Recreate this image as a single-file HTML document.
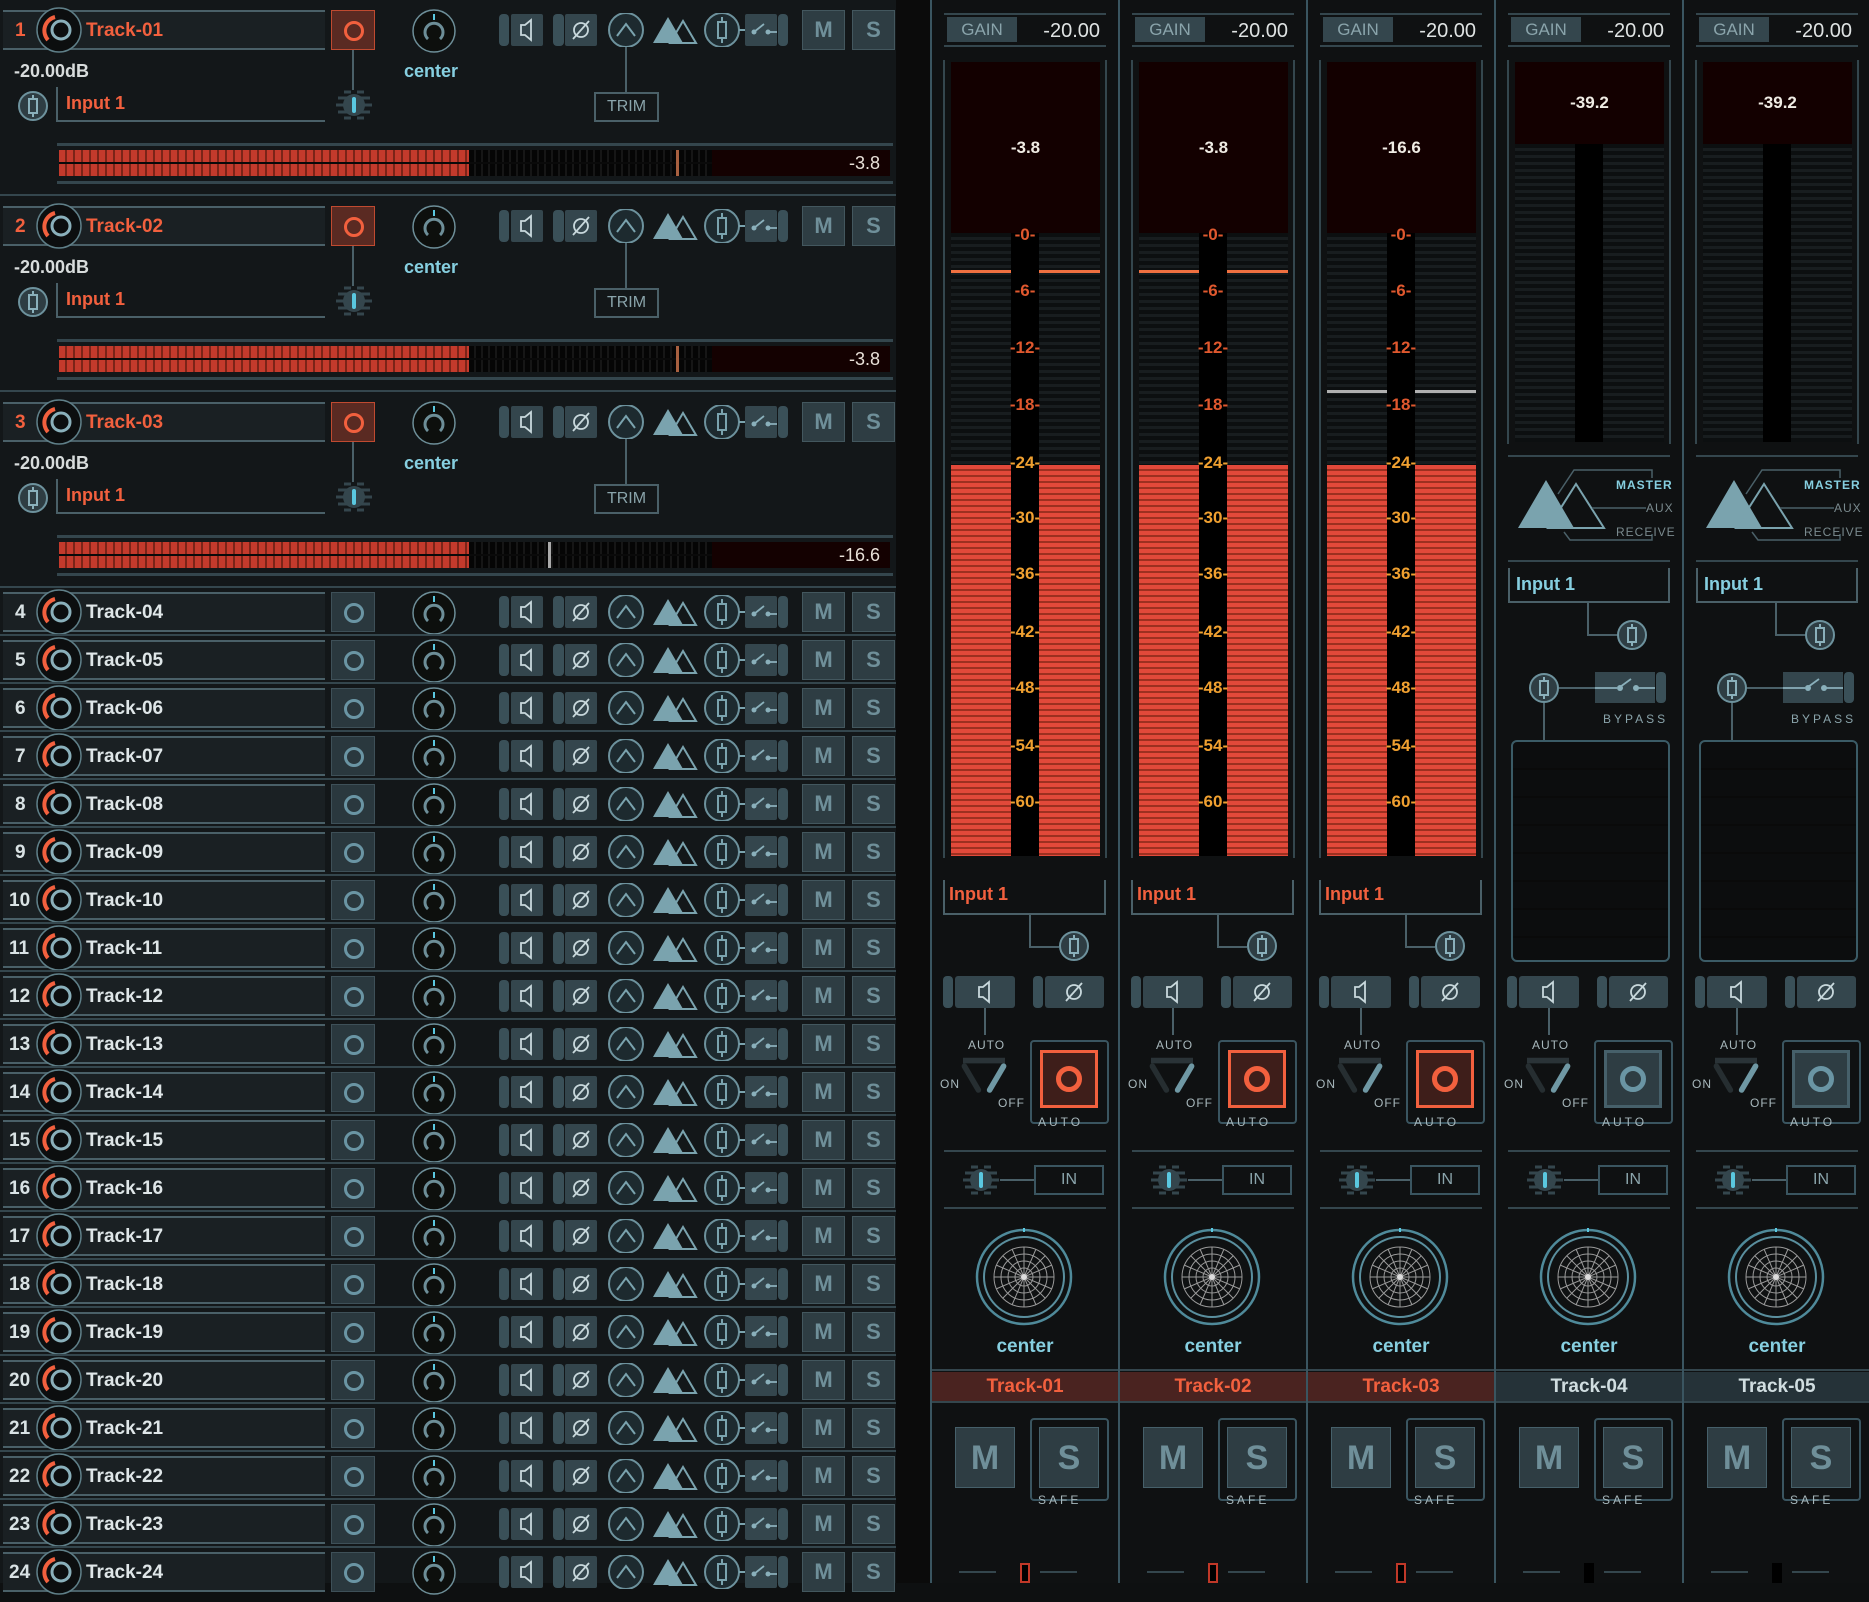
<!DOCTYPE html>
<html><head><meta charset="utf-8">
<style>
*{margin:0;padding:0;box-sizing:border-box}
body{width:1869px;height:1583px;background:#0e1011;position:relative;overflow:hidden;font-family:"Liberation Sans",sans-serif}
.a{position:absolute}
#left{position:absolute;left:0;top:0;width:896px;height:1583px;background:#131719}
.r{position:absolute;left:0;width:896px;height:60px}
.sep{position:absolute;left:0;top:4px;width:896px;height:2px;background:#34464d}
.nf{position:absolute;left:3px;top:10px;width:322px;height:40px;background:#1a2023;border-top:2px solid #4a6068;border-bottom:2px solid #4a6068}
.nf b{position:absolute;left:12px;top:8px;font-size:19px;color:#d9e2e4;font-weight:bold}
.nf span{position:absolute;left:83px;top:8px;font-size:19px;color:#dfe6e8;font-weight:bold}
.ex .nf b,.ex .nf span{color:#f2603e}
.nf svg{position:absolute;left:32px;top:-6px}
.rec{position:absolute;left:331px;top:10px;width:44px;height:40px;background:#2a383e;border:1px solid #3e5058}
.rec:after{content:"";position:absolute;left:12px;top:10px;width:14px;height:14px;border:3px solid #6a95a4;border-radius:50%}
.ex .rec{background:#5a2a22;border-color:#c04a30}
.ex .rec:after{border-color:#f2603e}
.pk{position:absolute;left:411px;top:8px}
.ic{position:absolute;left:499px;top:13px}
.m,.s{position:absolute;top:10px;width:43px;height:40px;background:#2e3d43;border:1px solid #43575e;color:#6f8f99;font-size:22px;font-weight:bold;text-align:center;line-height:38px}
.m{left:802px}.s{left:852px}
.db{position:absolute;left:14px;top:61px;color:#d8dcdc;font-size:18px;font-weight:bold}
.mic{position:absolute;left:17px;top:90px}
.inp{position:absolute;left:56px;top:87px;width:269px;height:35px;border-left:2px solid #4a6068;border-bottom:2px solid #4a6068}
.inp span{position:absolute;left:8px;top:6px;color:#f2603e;font-size:18px;font-weight:bold}
.fd{position:absolute;left:334px;top:88px}
.cen{position:absolute;left:404px;top:61px;color:#86cfe0;font-size:18px;font-weight:bold}
.vl{position:absolute;left:625px;top:47px;width:2px;height:46px;background:#4a6068}
.trim{position:absolute;left:594px;top:92px;width:65px;height:30px;border:2px solid #4a6068;color:#8aa4ab;font-size:16px;text-align:center;line-height:26px}
.ml{position:absolute;left:57px;width:836px;height:3px;background:#34464d}
.mtr{position:absolute;left:59px;top:150px;width:831px;height:26px;background:#0a0a0a}
.ln{position:absolute;left:0;height:12px;background:repeating-linear-gradient(90deg,#c33a2c 0 6px,#7a2418 6px 8px)}
.dk{position:absolute;height:12px;background:repeating-linear-gradient(90deg,#050505 0 5px,#161616 5px 7px)}
.pv{position:absolute;left:653px;top:0;width:178px;height:26px;background:#140101;color:#e8e0d8;font-size:18px;text-align:right;padding-right:10px;line-height:26px}
.pm{position:absolute;top:0;width:3px;height:26px;background:#a86040}
.pm.g{background:#aaa}
#gap{position:absolute;left:896px;top:0;width:34px;height:1583px;background:#0b0b0b}
.st{position:absolute;top:0;width:188px;height:1583px;background:#0f1112;border-left:2px solid #3a5560}
.hl{position:absolute;left:12px;width:162px;height:2px;background:#34464d}
.gain{position:absolute;left:15px;top:17px;width:70px;height:25px;background:#34464d;color:#8aa4ab;font-size:17px;text-align:center;line-height:25px}
.gv{position:absolute;left:90px;top:19px;width:78px;height:25px;color:#dfe3e3;font-size:20px;text-align:right;line-height:25px}
.vf{position:absolute;top:60px;width:2px;background:#34464d}
.mb{position:absolute;left:19px;top:62px;width:149px;background:#130000;color:#f0ece4;font-size:17px;font-weight:bold;text-align:center}
.sc{position:absolute;left:19px;width:149px;background:repeating-linear-gradient(180deg,#0c0f10 0 4px,#181d1f 4px 7px)}
.rf{position:absolute;left:19px;width:149px;top:465px;height:391px;background:repeating-linear-gradient(180deg,#e2493a 0 4px,#9c3020 4px 6px)}
.cc{position:absolute;left:79px;width:28px;background:#000}
.lb{position:absolute;left:56px;width:74px;text-align:center;color:#e0582e;font-size:17px;font-weight:bold}
.fl{position:absolute;height:3px;background:#f07040}
.si{position:absolute;left:11px;top:880px;width:163px;height:35px;border-left:2px solid #4a6068;border-right:2px solid #4a6068;border-bottom:2px solid #4a6068}
.si span{position:absolute;left:4px;top:4px;color:#f2603e;font-size:18px;font-weight:bold}
.btn{position:absolute;top:976px;height:32px;background:#34464d;border-radius:3px}
.tab{position:absolute;top:976px;width:10px;height:32px;background:#3a5058;border-radius:4px}
.t{position:absolute;color:#a8b8bc;font-size:12px;letter-spacing:1px}
.ab{position:absolute;left:98px;top:1040px;width:79px;height:84px;border:2px solid #3a5560;border-radius:4px}
.ai{position:absolute;left:108px;top:1050px;width:58px;height:58px;background:#3e1e1a;border:3px solid #f2603e}
.ai:after{content:"";position:absolute;left:13px;top:13px;width:26px;height:26px;border:5px solid #f2603e;border-radius:50%;box-sizing:border-box}
.ai.g{background:#2e3d43;border-color:#46606a}
.ai.g:after{border-color:#6a95a4}
.inb{position:absolute;left:102px;top:1165px;width:70px;height:30px;border:2px solid #3a5560;color:#8aa4ab;font-size:16px;text-align:center;line-height:26px}
.cn{position:absolute;left:0;width:186px;top:1336px;text-align:center;color:#86cfe0;font-size:19px;font-weight:bold}
.nb{position:absolute;left:0;width:186px;top:1372px;height:29px;text-align:center;font-size:19px;font-weight:bold;line-height:29px}
.bm{position:absolute;left:23px;top:1427px;width:60px;height:61px;background:#2e3d43;border:1px solid #46606a;color:#6f8f99;font-size:34px;font-weight:bold;text-align:center;line-height:60px}
.sb{position:absolute;left:98px;top:1418px;width:79px;height:83px;border:2px solid #3a5560;border-radius:4px}
.bs{position:absolute;left:107px;top:1427px;width:60px;height:61px;background:#2e3d43;border:1px solid #46606a;color:#6f8f99;font-size:34px;font-weight:bold;text-align:center;line-height:60px}
</style></head><body>
<svg width="0" height="0" style="position:absolute">
<defs>
<symbol id="ic" viewBox="0 0 290 34">
<rect x="0" y="1" width="10" height="32" rx="4" fill="#3a5058"/>
<rect x="12" y="1" width="32" height="32" rx="2" fill="#34464d"/>
<path d="M22 12h4l6-5v20l-6-5h-4z" fill="none" stroke="#c8d8dc" stroke-width="1.8"/>
<rect x="54" y="1" width="11" height="32" rx="4" fill="#3a5058"/>
<rect x="66" y="1" width="32" height="32" rx="2" fill="#34464d"/>
<circle cx="82" cy="17" r="7" fill="none" stroke="#c8d8dc" stroke-width="1.8"/>
<path d="M74 26L90 8" stroke="#c8d8dc" stroke-width="1.8"/>
<circle cx="127" cy="17" r="17" fill="#1d2a2f" stroke="#6d929d" stroke-width="2"/>
<path d="M118 23L127 11L136 23" fill="none" stroke="#7aa3ae" stroke-width="2"/>
<polygon points="154,30 169,4 184,30" fill="#7aa3ae"/>
<polygon points="171,30 184,8 197,30" fill="none" stroke="#7aa3ae" stroke-width="2"/>
<circle cx="223" cy="17" r="17" fill="#1d2a2f" stroke="#6d929d" stroke-width="2"/>
<rect x="219" y="9" width="8" height="16" fill="none" stroke="#7aa3ae" stroke-width="2"/>
<path d="M223 4v5M223 25v5M240 17h8" stroke="#7aa3ae" stroke-width="2"/>
<rect x="246" y="1" width="32" height="32" rx="2" fill="#34464d"/>
<rect x="279" y="1" width="10" height="32" rx="4" fill="#3a5058"/>
<circle cx="255" cy="19" r="2.5" fill="#8ab0bb"/><circle cx="269" cy="19" r="2.5" fill="#8ab0bb"/>
<path d="M255 19L265 11M269 19h9" stroke="#8ab0bb" stroke-width="1.8"/>
</symbol>
<symbol id="kn" viewBox="0 0 48 48">
<circle cx="24" cy="24" r="22" fill="#0c0e0f" stroke="#5f7f88" stroke-width="1.5"/>
<path d="M13 34A14 14 0 0 1 20 11" fill="none" stroke="#f2603e" stroke-width="4"/>
<circle cx="26" cy="24" r="9" fill="none" stroke="#8ab0bb" stroke-width="3"/>
</symbol>
<symbol id="pk" viewBox="0 0 46 46">
<circle cx="23" cy="23" r="21" fill="#0d0f0d" stroke="#6d8e98" stroke-width="1.5"/>
<path d="M17 31A9 9 0 1 1 29 31" fill="none" stroke="#6d8e98" stroke-width="3"/>
<path d="M23 6v6" stroke="#5ac8e0" stroke-width="2"/>
</symbol>
<symbol id="mic" viewBox="0 0 32 32">
<circle cx="16" cy="16" r="14" fill="#2e3d43" stroke="#6d929d" stroke-width="2"/>
<rect x="12" y="9" width="8" height="14" fill="none" stroke="#8ab0bb" stroke-width="2"/>
<path d="M16 5v4M16 23v4" stroke="#8ab0bb" stroke-width="2"/>
</symbol>
<symbol id="fd" viewBox="0 0 40 34">
<path d="M10 4h7M23 4h7M4 10h32M2 17h36M4 24h32M10 30h7M23 30h7" stroke="#34464d" stroke-width="3"/>
<ellipse cx="20" cy="17" rx="11" ry="11" fill="#34464d"/>
<rect x="18" y="9" width="4" height="16" rx="2" fill="#5ac8e0"/>
</symbol>
<symbol id="dial" viewBox="0 0 100 100">
<circle cx="50" cy="50" r="47" fill="none" stroke="#4f8a9a" stroke-width="2.5"/>
<circle cx="50" cy="50" r="40" fill="none" stroke="#5a8f9e" stroke-width="2"/>
<g fill="none" stroke="#9a9a9a" stroke-width="1">
<circle cx="50" cy="50" r="30"/><circle cx="50" cy="50" r="23"/><circle cx="50" cy="50" r="16"/><circle cx="50" cy="50" r="9"/>
<path d="M50 20V80M20 50H80M29 29L71 71M71 29L29 71M38 22L62 78M62 22L38 78M22 38L78 62M22 62L78 38"/>
</g>
<circle cx="50" cy="50" r="3" fill="#ddd"/>
<path d="M50 1v4" stroke="#5ac8e0" stroke-width="2"/>
</symbol>
<symbol id="rt" viewBox="0 0 170 80">
<polygon points="12,60 40,12 68,60" fill="#7aa3ae"/>
<polygon points="42,60 70,16 98,60" fill="none" stroke="#7aa3ae" stroke-width="2"/>
<path d="M52 26L68 2H146V10M86 40H140M58 64L64 72H146V66" fill="none" stroke="#4a6068" stroke-width="1.5"/>
</symbol>
<symbol id="sw" viewBox="0 0 80 60">
<path d="M10 8H70" stroke="#2a3337" stroke-width="8"/>
<path d="M12 16L32 50" stroke="#262e31" stroke-width="8" stroke-linecap="round"/>
<path d="M68 16L48 50" stroke="#6f98a4" stroke-width="8" stroke-linecap="round"/>
</symbol>
</defs></svg>

<div id="left">
<div class="r ex" style="top:0;height:196px">
<div class="nf"><b>1</b><svg width="48" height="48"><use href="#kn"/></svg><span>Track-01</span></div>
<div class="rec"></div><svg class="pk" width="46" height="46"><use href="#pk"/></svg>
<svg class="ic" width="290" height="34"><use href="#ic"/></svg>
<div class="m">M</div><div class="s">S</div>
<div class="db">-20.00dB</div><svg class="mic" width="32" height="32"><use href="#mic"/></svg>
<div class="inp"><span>Input 1</span></div><div class="a" style="left:352px;top:50px;width:2px;height:40px;background:#4a6068"></div><svg class="fd" width="40" height="34"><use href="#fd"/></svg>
<div class="cen">center</div><div class="vl"></div><div class="trim">TRIM</div>
<div class="ml" style="top:143px"></div><div class="ml" style="top:181px"></div>
<div class="mtr"><div class="ln" style="top:0;width:410px"></div><div class="ln" style="top:14px;width:410px"></div><div class="dk" style="left:410px;top:0;width:243px"></div><div class="dk" style="left:410px;top:14px;width:243px"></div><div class="pm" style="left:617px"></div><div class="pv">-3.8</div></div>
<div class="a" style="left:0;top:194px;width:896px;height:2px;background:#34464d"></div>
</div>
<div class="r ex" style="top:196px;height:196px">
<div class="nf"><b>2</b><svg width="48" height="48"><use href="#kn"/></svg><span>Track-02</span></div>
<div class="rec"></div><svg class="pk" width="46" height="46"><use href="#pk"/></svg>
<svg class="ic" width="290" height="34"><use href="#ic"/></svg>
<div class="m">M</div><div class="s">S</div>
<div class="db">-20.00dB</div><svg class="mic" width="32" height="32"><use href="#mic"/></svg>
<div class="inp"><span>Input 1</span></div><div class="a" style="left:352px;top:50px;width:2px;height:40px;background:#4a6068"></div><svg class="fd" width="40" height="34"><use href="#fd"/></svg>
<div class="cen">center</div><div class="vl"></div><div class="trim">TRIM</div>
<div class="ml" style="top:143px"></div><div class="ml" style="top:181px"></div>
<div class="mtr"><div class="ln" style="top:0;width:410px"></div><div class="ln" style="top:14px;width:410px"></div><div class="dk" style="left:410px;top:0;width:243px"></div><div class="dk" style="left:410px;top:14px;width:243px"></div><div class="pm" style="left:617px"></div><div class="pv">-3.8</div></div>
<div class="a" style="left:0;top:194px;width:896px;height:2px;background:#34464d"></div>
</div>
<div class="r ex" style="top:392px;height:196px">
<div class="nf"><b>3</b><svg width="48" height="48"><use href="#kn"/></svg><span>Track-03</span></div>
<div class="rec"></div><svg class="pk" width="46" height="46"><use href="#pk"/></svg>
<svg class="ic" width="290" height="34"><use href="#ic"/></svg>
<div class="m">M</div><div class="s">S</div>
<div class="db">-20.00dB</div><svg class="mic" width="32" height="32"><use href="#mic"/></svg>
<div class="inp"><span>Input 1</span></div><div class="a" style="left:352px;top:50px;width:2px;height:40px;background:#4a6068"></div><svg class="fd" width="40" height="34"><use href="#fd"/></svg>
<div class="cen">center</div><div class="vl"></div><div class="trim">TRIM</div>
<div class="ml" style="top:143px"></div><div class="ml" style="top:181px"></div>
<div class="mtr"><div class="ln" style="top:0;width:410px"></div><div class="ln" style="top:14px;width:410px"></div><div class="dk" style="left:410px;top:0;width:243px"></div><div class="dk" style="left:410px;top:14px;width:243px"></div><div class="pm g" style="left:489px"></div><div class="pv">-16.6</div></div>
<div class="a" style="left:0;top:194px;width:896px;height:2px;background:#34464d"></div>
</div>

<div class="r" style="top:582px"><div class="sep"></div><div class="nf"><b>4</b><svg width="48" height="48"><use href="#kn"/></svg><span>Track-04</span></div><div class="rec"></div><svg class="pk" width="46" height="46"><use href="#pk"/></svg><svg class="ic" width="290" height="34"><use href="#ic"/></svg><div class="m">M</div><div class="s">S</div></div>
<div class="r" style="top:630px"><div class="sep"></div><div class="nf"><b>5</b><svg width="48" height="48"><use href="#kn"/></svg><span>Track-05</span></div><div class="rec"></div><svg class="pk" width="46" height="46"><use href="#pk"/></svg><svg class="ic" width="290" height="34"><use href="#ic"/></svg><div class="m">M</div><div class="s">S</div></div>
<div class="r" style="top:678px"><div class="sep"></div><div class="nf"><b>6</b><svg width="48" height="48"><use href="#kn"/></svg><span>Track-06</span></div><div class="rec"></div><svg class="pk" width="46" height="46"><use href="#pk"/></svg><svg class="ic" width="290" height="34"><use href="#ic"/></svg><div class="m">M</div><div class="s">S</div></div>
<div class="r" style="top:726px"><div class="sep"></div><div class="nf"><b>7</b><svg width="48" height="48"><use href="#kn"/></svg><span>Track-07</span></div><div class="rec"></div><svg class="pk" width="46" height="46"><use href="#pk"/></svg><svg class="ic" width="290" height="34"><use href="#ic"/></svg><div class="m">M</div><div class="s">S</div></div>
<div class="r" style="top:774px"><div class="sep"></div><div class="nf"><b>8</b><svg width="48" height="48"><use href="#kn"/></svg><span>Track-08</span></div><div class="rec"></div><svg class="pk" width="46" height="46"><use href="#pk"/></svg><svg class="ic" width="290" height="34"><use href="#ic"/></svg><div class="m">M</div><div class="s">S</div></div>
<div class="r" style="top:822px"><div class="sep"></div><div class="nf"><b>9</b><svg width="48" height="48"><use href="#kn"/></svg><span>Track-09</span></div><div class="rec"></div><svg class="pk" width="46" height="46"><use href="#pk"/></svg><svg class="ic" width="290" height="34"><use href="#ic"/></svg><div class="m">M</div><div class="s">S</div></div>
<div class="r" style="top:870px"><div class="sep"></div><div class="nf"><b style="left:6px">10</b><svg width="48" height="48"><use href="#kn"/></svg><span>Track-10</span></div><div class="rec"></div><svg class="pk" width="46" height="46"><use href="#pk"/></svg><svg class="ic" width="290" height="34"><use href="#ic"/></svg><div class="m">M</div><div class="s">S</div></div>
<div class="r" style="top:918px"><div class="sep"></div><div class="nf"><b style="left:6px">11</b><svg width="48" height="48"><use href="#kn"/></svg><span>Track-11</span></div><div class="rec"></div><svg class="pk" width="46" height="46"><use href="#pk"/></svg><svg class="ic" width="290" height="34"><use href="#ic"/></svg><div class="m">M</div><div class="s">S</div></div>
<div class="r" style="top:966px"><div class="sep"></div><div class="nf"><b style="left:6px">12</b><svg width="48" height="48"><use href="#kn"/></svg><span>Track-12</span></div><div class="rec"></div><svg class="pk" width="46" height="46"><use href="#pk"/></svg><svg class="ic" width="290" height="34"><use href="#ic"/></svg><div class="m">M</div><div class="s">S</div></div>
<div class="r" style="top:1014px"><div class="sep"></div><div class="nf"><b style="left:6px">13</b><svg width="48" height="48"><use href="#kn"/></svg><span>Track-13</span></div><div class="rec"></div><svg class="pk" width="46" height="46"><use href="#pk"/></svg><svg class="ic" width="290" height="34"><use href="#ic"/></svg><div class="m">M</div><div class="s">S</div></div>
<div class="r" style="top:1062px"><div class="sep"></div><div class="nf"><b style="left:6px">14</b><svg width="48" height="48"><use href="#kn"/></svg><span>Track-14</span></div><div class="rec"></div><svg class="pk" width="46" height="46"><use href="#pk"/></svg><svg class="ic" width="290" height="34"><use href="#ic"/></svg><div class="m">M</div><div class="s">S</div></div>
<div class="r" style="top:1110px"><div class="sep"></div><div class="nf"><b style="left:6px">15</b><svg width="48" height="48"><use href="#kn"/></svg><span>Track-15</span></div><div class="rec"></div><svg class="pk" width="46" height="46"><use href="#pk"/></svg><svg class="ic" width="290" height="34"><use href="#ic"/></svg><div class="m">M</div><div class="s">S</div></div>
<div class="r" style="top:1158px"><div class="sep"></div><div class="nf"><b style="left:6px">16</b><svg width="48" height="48"><use href="#kn"/></svg><span>Track-16</span></div><div class="rec"></div><svg class="pk" width="46" height="46"><use href="#pk"/></svg><svg class="ic" width="290" height="34"><use href="#ic"/></svg><div class="m">M</div><div class="s">S</div></div>
<div class="r" style="top:1206px"><div class="sep"></div><div class="nf"><b style="left:6px">17</b><svg width="48" height="48"><use href="#kn"/></svg><span>Track-17</span></div><div class="rec"></div><svg class="pk" width="46" height="46"><use href="#pk"/></svg><svg class="ic" width="290" height="34"><use href="#ic"/></svg><div class="m">M</div><div class="s">S</div></div>
<div class="r" style="top:1254px"><div class="sep"></div><div class="nf"><b style="left:6px">18</b><svg width="48" height="48"><use href="#kn"/></svg><span>Track-18</span></div><div class="rec"></div><svg class="pk" width="46" height="46"><use href="#pk"/></svg><svg class="ic" width="290" height="34"><use href="#ic"/></svg><div class="m">M</div><div class="s">S</div></div>
<div class="r" style="top:1302px"><div class="sep"></div><div class="nf"><b style="left:6px">19</b><svg width="48" height="48"><use href="#kn"/></svg><span>Track-19</span></div><div class="rec"></div><svg class="pk" width="46" height="46"><use href="#pk"/></svg><svg class="ic" width="290" height="34"><use href="#ic"/></svg><div class="m">M</div><div class="s">S</div></div>
<div class="r" style="top:1350px"><div class="sep"></div><div class="nf"><b style="left:6px">20</b><svg width="48" height="48"><use href="#kn"/></svg><span>Track-20</span></div><div class="rec"></div><svg class="pk" width="46" height="46"><use href="#pk"/></svg><svg class="ic" width="290" height="34"><use href="#ic"/></svg><div class="m">M</div><div class="s">S</div></div>
<div class="r" style="top:1398px"><div class="sep"></div><div class="nf"><b style="left:6px">21</b><svg width="48" height="48"><use href="#kn"/></svg><span>Track-21</span></div><div class="rec"></div><svg class="pk" width="46" height="46"><use href="#pk"/></svg><svg class="ic" width="290" height="34"><use href="#ic"/></svg><div class="m">M</div><div class="s">S</div></div>
<div class="r" style="top:1446px"><div class="sep"></div><div class="nf"><b style="left:6px">22</b><svg width="48" height="48"><use href="#kn"/></svg><span>Track-22</span></div><div class="rec"></div><svg class="pk" width="46" height="46"><use href="#pk"/></svg><svg class="ic" width="290" height="34"><use href="#ic"/></svg><div class="m">M</div><div class="s">S</div></div>
<div class="r" style="top:1494px"><div class="sep"></div><div class="nf"><b style="left:6px">23</b><svg width="48" height="48"><use href="#kn"/></svg><span>Track-23</span></div><div class="rec"></div><svg class="pk" width="46" height="46"><use href="#pk"/></svg><svg class="ic" width="290" height="34"><use href="#ic"/></svg><div class="m">M</div><div class="s">S</div></div>
<div class="r" style="top:1542px"><div class="sep"></div><div class="nf"><b style="left:6px">24</b><svg width="48" height="48"><use href="#kn"/></svg><span>Track-24</span></div><div class="rec"></div><svg class="pk" width="46" height="46"><use href="#pk"/></svg><svg class="ic" width="290" height="34"><use href="#ic"/></svg><div class="m">M</div><div class="s">S</div></div>
</div>
<div id="gap"></div>

<div class="st" style="left:930px">
<div class="hl" style="top:13px"></div><div class="gain">GAIN</div><div class="gv">-20.00</div><div class="hl" style="top:45px"></div>
<div class="vf" style="left:11px;height:798px"></div><div class="vf" style="left:173px;height:798px"></div>
<div class="mb" style="height:171px;line-height:171px">-3.8</div>
<div class="sc" style="top:233px;height:623px"></div><div class="rf"></div><div class="cc" style="top:233px;height:623px"></div>
<div class="fl" style="left:19px;width:60px;top:270px"></div><div class="fl" style="left:107px;width:61px;top:270px"></div>
<div class="lb" style="top:225px">-0-</div><div class="lb" style="top:281px">-6-</div><div class="lb" style="top:338px">-12-</div><div class="lb" style="top:395px">-18-</div><div class="lb" style="top:453px;color:#f0a030">-24-</div><div class="lb" style="top:508px;color:#f0a030">-30-</div><div class="lb" style="top:564px;color:#f0a030">-36-</div><div class="lb" style="top:622px;color:#f0a030">-42-</div><div class="lb" style="top:678px;color:#f0a030">-48-</div><div class="lb" style="top:736px;color:#f0a030">-54-</div><div class="lb" style="top:792px;color:#f0a030">-60-</div>
<div class="si"><span>Input 1</span></div>
<div class="a" style="left:97px;top:915px;width:2px;height:33px;background:#4a6068"></div><div class="a" style="left:97px;top:946px;width:30px;height:2px;background:#4a6068"></div>
<svg class="a" style="left:126px;top:930px" width="32" height="32"><use href="#mic"/></svg>
<div class="tab" style="left:11px"></div><div class="btn" style="left:23px;width:60px"><svg width="60" height="32" viewBox="0 0 60 32"><path d="M24 11h4l6-5v20l-6-5h-4z" fill="none" stroke="#c8d8dc" stroke-width="1.8"/></svg></div>
<div class="tab" style="left:101px"></div><div class="btn" style="left:113px;width:59px"><svg width="59" height="32" viewBox="0 0 59 32"><circle cx="29" cy="16" r="7" fill="none" stroke="#c8d8dc" stroke-width="1.8"/><path d="M21 25L37 7" stroke="#c8d8dc" stroke-width="1.8"/></svg></div>
<div class="a" style="left:52px;top:1008px;width:2px;height:27px;background:#4a6068"></div>
<div class="t" style="left:36px;top:1038px">AUTO</div><div class="t" style="left:8px;top:1077px">ON</div><div class="t" style="left:66px;top:1096px">OFF</div>
<svg class="a" style="left:24px;top:1052px" width="56" height="48" viewBox="0 0 80 60"><use href="#sw"/></svg>
<div class="ab"></div><div class="ai"></div><div class="t" style="left:106px;top:1115px;letter-spacing:3px">AUTO</div>
<div class="hl" style="top:1150px"></div><svg class="a" style="left:29px;top:1163px" width="40" height="34"><use href="#fd"/></svg><div class="a" style="left:68px;top:1179px;width:34px;height:2px;background:#4a6068"></div><div class="inb">IN</div><div class="hl" style="top:1207px"></div>
<svg class="a" style="left:42px;top:1227px" width="100" height="100"><use href="#dial"/></svg>
<div class="cn">center</div>
<div class="a" style="left:0;top:1369px;width:186px;height:2px;background:#34464d"></div>
<div class="nb" style="background:#4a2320;color:#f2603e">Track-01</div>
<div class="a" style="left:0;top:1401px;width:186px;height:2px;background:#34464d"></div>
<div class="bm">M</div><div class="sb"></div><div class="bs">S</div><div class="t" style="left:106px;top:1493px;letter-spacing:3px">SAFE</div>
<div class="a" style="left:27px;top:1571px;width:37px;height:2px;background:#34464d"></div><div class="a" style="left:108px;top:1571px;width:37px;height:2px;background:#34464d"></div><div class="a" style="left:88px;top:1563px;width:10px;height:20px;background:#000;border:2px solid #c03828"></div>
</div>

<div class="st" style="left:1118px">
<div class="hl" style="top:13px"></div><div class="gain">GAIN</div><div class="gv">-20.00</div><div class="hl" style="top:45px"></div>
<div class="vf" style="left:11px;height:798px"></div><div class="vf" style="left:173px;height:798px"></div>
<div class="mb" style="height:171px;line-height:171px">-3.8</div>
<div class="sc" style="top:233px;height:623px"></div><div class="rf"></div><div class="cc" style="top:233px;height:623px"></div>
<div class="fl" style="left:19px;width:60px;top:270px"></div><div class="fl" style="left:107px;width:61px;top:270px"></div>
<div class="lb" style="top:225px">-0-</div><div class="lb" style="top:281px">-6-</div><div class="lb" style="top:338px">-12-</div><div class="lb" style="top:395px">-18-</div><div class="lb" style="top:453px;color:#f0a030">-24-</div><div class="lb" style="top:508px;color:#f0a030">-30-</div><div class="lb" style="top:564px;color:#f0a030">-36-</div><div class="lb" style="top:622px;color:#f0a030">-42-</div><div class="lb" style="top:678px;color:#f0a030">-48-</div><div class="lb" style="top:736px;color:#f0a030">-54-</div><div class="lb" style="top:792px;color:#f0a030">-60-</div>
<div class="si"><span>Input 1</span></div>
<div class="a" style="left:97px;top:915px;width:2px;height:33px;background:#4a6068"></div><div class="a" style="left:97px;top:946px;width:30px;height:2px;background:#4a6068"></div>
<svg class="a" style="left:126px;top:930px" width="32" height="32"><use href="#mic"/></svg>
<div class="tab" style="left:11px"></div><div class="btn" style="left:23px;width:60px"><svg width="60" height="32" viewBox="0 0 60 32"><path d="M24 11h4l6-5v20l-6-5h-4z" fill="none" stroke="#c8d8dc" stroke-width="1.8"/></svg></div>
<div class="tab" style="left:101px"></div><div class="btn" style="left:113px;width:59px"><svg width="59" height="32" viewBox="0 0 59 32"><circle cx="29" cy="16" r="7" fill="none" stroke="#c8d8dc" stroke-width="1.8"/><path d="M21 25L37 7" stroke="#c8d8dc" stroke-width="1.8"/></svg></div>
<div class="a" style="left:52px;top:1008px;width:2px;height:27px;background:#4a6068"></div>
<div class="t" style="left:36px;top:1038px">AUTO</div><div class="t" style="left:8px;top:1077px">ON</div><div class="t" style="left:66px;top:1096px">OFF</div>
<svg class="a" style="left:24px;top:1052px" width="56" height="48" viewBox="0 0 80 60"><use href="#sw"/></svg>
<div class="ab"></div><div class="ai"></div><div class="t" style="left:106px;top:1115px;letter-spacing:3px">AUTO</div>
<div class="hl" style="top:1150px"></div><svg class="a" style="left:29px;top:1163px" width="40" height="34"><use href="#fd"/></svg><div class="a" style="left:68px;top:1179px;width:34px;height:2px;background:#4a6068"></div><div class="inb">IN</div><div class="hl" style="top:1207px"></div>
<svg class="a" style="left:42px;top:1227px" width="100" height="100"><use href="#dial"/></svg>
<div class="cn">center</div>
<div class="a" style="left:0;top:1369px;width:186px;height:2px;background:#34464d"></div>
<div class="nb" style="background:#4a2320;color:#f2603e">Track-02</div>
<div class="a" style="left:0;top:1401px;width:186px;height:2px;background:#34464d"></div>
<div class="bm">M</div><div class="sb"></div><div class="bs">S</div><div class="t" style="left:106px;top:1493px;letter-spacing:3px">SAFE</div>
<div class="a" style="left:27px;top:1571px;width:37px;height:2px;background:#34464d"></div><div class="a" style="left:108px;top:1571px;width:37px;height:2px;background:#34464d"></div><div class="a" style="left:88px;top:1563px;width:10px;height:20px;background:#000;border:2px solid #c03828"></div>
</div>

<div class="st" style="left:1306px">
<div class="hl" style="top:13px"></div><div class="gain">GAIN</div><div class="gv">-20.00</div><div class="hl" style="top:45px"></div>
<div class="vf" style="left:11px;height:798px"></div><div class="vf" style="left:173px;height:798px"></div>
<div class="mb" style="height:171px;line-height:171px">-16.6</div>
<div class="sc" style="top:233px;height:623px"></div><div class="rf"></div><div class="cc" style="top:233px;height:623px"></div>
<div class="fl" style="left:19px;width:60px;top:390px;background:#b0b0b0"></div><div class="fl" style="left:107px;width:61px;top:390px;background:#b0b0b0"></div>
<div class="lb" style="top:225px">-0-</div><div class="lb" style="top:281px">-6-</div><div class="lb" style="top:338px">-12-</div><div class="lb" style="top:395px">-18-</div><div class="lb" style="top:453px;color:#f0a030">-24-</div><div class="lb" style="top:508px;color:#f0a030">-30-</div><div class="lb" style="top:564px;color:#f0a030">-36-</div><div class="lb" style="top:622px;color:#f0a030">-42-</div><div class="lb" style="top:678px;color:#f0a030">-48-</div><div class="lb" style="top:736px;color:#f0a030">-54-</div><div class="lb" style="top:792px;color:#f0a030">-60-</div>
<div class="si"><span>Input 1</span></div>
<div class="a" style="left:97px;top:915px;width:2px;height:33px;background:#4a6068"></div><div class="a" style="left:97px;top:946px;width:30px;height:2px;background:#4a6068"></div>
<svg class="a" style="left:126px;top:930px" width="32" height="32"><use href="#mic"/></svg>
<div class="tab" style="left:11px"></div><div class="btn" style="left:23px;width:60px"><svg width="60" height="32" viewBox="0 0 60 32"><path d="M24 11h4l6-5v20l-6-5h-4z" fill="none" stroke="#c8d8dc" stroke-width="1.8"/></svg></div>
<div class="tab" style="left:101px"></div><div class="btn" style="left:113px;width:59px"><svg width="59" height="32" viewBox="0 0 59 32"><circle cx="29" cy="16" r="7" fill="none" stroke="#c8d8dc" stroke-width="1.8"/><path d="M21 25L37 7" stroke="#c8d8dc" stroke-width="1.8"/></svg></div>
<div class="a" style="left:52px;top:1008px;width:2px;height:27px;background:#4a6068"></div>
<div class="t" style="left:36px;top:1038px">AUTO</div><div class="t" style="left:8px;top:1077px">ON</div><div class="t" style="left:66px;top:1096px">OFF</div>
<svg class="a" style="left:24px;top:1052px" width="56" height="48" viewBox="0 0 80 60"><use href="#sw"/></svg>
<div class="ab"></div><div class="ai"></div><div class="t" style="left:106px;top:1115px;letter-spacing:3px">AUTO</div>
<div class="hl" style="top:1150px"></div><svg class="a" style="left:29px;top:1163px" width="40" height="34"><use href="#fd"/></svg><div class="a" style="left:68px;top:1179px;width:34px;height:2px;background:#4a6068"></div><div class="inb">IN</div><div class="hl" style="top:1207px"></div>
<svg class="a" style="left:42px;top:1227px" width="100" height="100"><use href="#dial"/></svg>
<div class="cn">center</div>
<div class="a" style="left:0;top:1369px;width:186px;height:2px;background:#34464d"></div>
<div class="nb" style="background:#4a2320;color:#f2603e">Track-03</div>
<div class="a" style="left:0;top:1401px;width:186px;height:2px;background:#34464d"></div>
<div class="bm">M</div><div class="sb"></div><div class="bs">S</div><div class="t" style="left:106px;top:1493px;letter-spacing:3px">SAFE</div>
<div class="a" style="left:27px;top:1571px;width:37px;height:2px;background:#34464d"></div><div class="a" style="left:108px;top:1571px;width:37px;height:2px;background:#34464d"></div><div class="a" style="left:88px;top:1563px;width:10px;height:20px;background:#000;border:2px solid #c03828"></div>
</div>

<div class="st" style="left:1494px">
<div class="hl" style="top:13px"></div><div class="gain">GAIN</div><div class="gv">-20.00</div><div class="hl" style="top:45px"></div>
<div class="vf" style="left:11px;height:384px"></div><div class="vf" style="left:173px;height:384px"></div>
<div class="mb" style="height:82px;line-height:82px">-39.2</div>
<div class="sc" style="top:144px;height:298px"></div><div class="cc" style="top:144px;height:298px"></div>
<div class="hl" style="top:455px"></div>
<svg class="a" style="left:10px;top:468px" width="170" height="80"><use href="#rt"/></svg>
<div class="a" style="left:120px;top:478px;color:#86cfe0;font-size:12px;font-weight:bold;letter-spacing:1px">MASTER</div>
<div class="a" style="left:150px;top:501px;color:#7a8a8e;font-size:12px;letter-spacing:1px">AUX</div>
<div class="a" style="left:120px;top:525px;color:#7a8a8e;font-size:12px;letter-spacing:1px">RECEIVE</div>
<div class="hl" style="top:560px"></div>
<div class="a" style="left:12px;top:568px;width:162px;height:35px;border-left:2px solid #4a6068;border-right:2px solid #4a6068;border-bottom:2px solid #4a6068"><span class="a" style="left:6px;top:6px;color:#86cfe0;font-size:18px;font-weight:bold">Input 1</span></div>
<div class="a" style="left:91px;top:603px;width:2px;height:33px;background:#4a6068"></div><div class="a" style="left:91px;top:634px;width:30px;height:2px;background:#4a6068"></div>
<svg class="a" style="left:120px;top:619px" width="32" height="32"><use href="#mic"/></svg>
<svg class="a" style="left:32px;top:672px" width="32" height="32"><use href="#mic"/></svg>
<div class="a" style="left:63px;top:687px;width:40px;height:2px;background:#4a6068"></div>
<div class="a" style="left:99px;top:672px;width:60px;height:31px;background:#34464d"><svg width="60" height="31"><circle cx="25" cy="16" r="3" fill="#8ab0bb"/><circle cx="41" cy="16" r="3" fill="#8ab0bb"/><path d="M25 15L36 7M41 16h19M0 16h22" stroke="#8ab0bb" stroke-width="1.8"/></svg></div>
<div class="a" style="left:160px;top:672px;width:10px;height:31px;background:#3a5058;border-radius:4px"></div>
<div class="t" style="left:107px;top:712px;letter-spacing:3px;color:#8aa4ab">BYPASS</div>
<div class="a" style="left:47px;top:703px;width:2px;height:37px;background:#4a6068"></div>
<div class="a" style="left:15px;top:740px;width:159px;height:222px;border:2px solid #3b5b66;border-radius:6px;background:repeating-linear-gradient(180deg,#0c0d0e 0 26px,#0a0a0a 26px 28px)"></div>
<div class="tab" style="left:11px"></div><div class="btn" style="left:23px;width:60px"><svg width="60" height="32" viewBox="0 0 60 32"><path d="M24 11h4l6-5v20l-6-5h-4z" fill="none" stroke="#c8d8dc" stroke-width="1.8"/></svg></div>
<div class="tab" style="left:101px"></div><div class="btn" style="left:113px;width:59px"><svg width="59" height="32" viewBox="0 0 59 32"><circle cx="29" cy="16" r="7" fill="none" stroke="#c8d8dc" stroke-width="1.8"/><path d="M21 25L37 7" stroke="#c8d8dc" stroke-width="1.8"/></svg></div>
<div class="a" style="left:52px;top:1008px;width:2px;height:27px;background:#4a6068"></div>
<div class="t" style="left:36px;top:1038px">AUTO</div><div class="t" style="left:8px;top:1077px">ON</div><div class="t" style="left:66px;top:1096px">OFF</div>
<svg class="a" style="left:24px;top:1052px" width="56" height="48" viewBox="0 0 80 60"><use href="#sw"/></svg>
<div class="ab"></div><div class="ai g"></div><div class="t" style="left:106px;top:1115px;letter-spacing:3px">AUTO</div>
<div class="hl" style="top:1150px"></div><svg class="a" style="left:29px;top:1163px" width="40" height="34"><use href="#fd"/></svg><div class="a" style="left:68px;top:1179px;width:34px;height:2px;background:#4a6068"></div><div class="inb">IN</div><div class="hl" style="top:1207px"></div>
<svg class="a" style="left:42px;top:1227px" width="100" height="100"><use href="#dial"/></svg>
<div class="cn">center</div>
<div class="a" style="left:0;top:1369px;width:186px;height:2px;background:#34464d"></div>
<div class="nb" style="background:#253238;color:#d0dde0">Track-04</div>
<div class="a" style="left:0;top:1401px;width:186px;height:2px;background:#34464d"></div>
<div class="bm">M</div><div class="sb"></div><div class="bs">S</div><div class="t" style="left:106px;top:1493px;letter-spacing:3px">SAFE</div>
<div class="a" style="left:27px;top:1571px;width:37px;height:2px;background:#34464d"></div><div class="a" style="left:108px;top:1571px;width:37px;height:2px;background:#34464d"></div><div class="a" style="left:88px;top:1563px;width:10px;height:20px;background:#000"></div>
</div>

<div class="st" style="left:1682px">
<div class="hl" style="top:13px"></div><div class="gain">GAIN</div><div class="gv">-20.00</div><div class="hl" style="top:45px"></div>
<div class="vf" style="left:11px;height:384px"></div><div class="vf" style="left:173px;height:384px"></div>
<div class="mb" style="height:82px;line-height:82px">-39.2</div>
<div class="sc" style="top:144px;height:298px"></div><div class="cc" style="top:144px;height:298px"></div>
<div class="hl" style="top:455px"></div>
<svg class="a" style="left:10px;top:468px" width="170" height="80"><use href="#rt"/></svg>
<div class="a" style="left:120px;top:478px;color:#86cfe0;font-size:12px;font-weight:bold;letter-spacing:1px">MASTER</div>
<div class="a" style="left:150px;top:501px;color:#7a8a8e;font-size:12px;letter-spacing:1px">AUX</div>
<div class="a" style="left:120px;top:525px;color:#7a8a8e;font-size:12px;letter-spacing:1px">RECEIVE</div>
<div class="hl" style="top:560px"></div>
<div class="a" style="left:12px;top:568px;width:162px;height:35px;border-left:2px solid #4a6068;border-right:2px solid #4a6068;border-bottom:2px solid #4a6068"><span class="a" style="left:6px;top:6px;color:#86cfe0;font-size:18px;font-weight:bold">Input 1</span></div>
<div class="a" style="left:91px;top:603px;width:2px;height:33px;background:#4a6068"></div><div class="a" style="left:91px;top:634px;width:30px;height:2px;background:#4a6068"></div>
<svg class="a" style="left:120px;top:619px" width="32" height="32"><use href="#mic"/></svg>
<svg class="a" style="left:32px;top:672px" width="32" height="32"><use href="#mic"/></svg>
<div class="a" style="left:63px;top:687px;width:40px;height:2px;background:#4a6068"></div>
<div class="a" style="left:99px;top:672px;width:60px;height:31px;background:#34464d"><svg width="60" height="31"><circle cx="25" cy="16" r="3" fill="#8ab0bb"/><circle cx="41" cy="16" r="3" fill="#8ab0bb"/><path d="M25 15L36 7M41 16h19M0 16h22" stroke="#8ab0bb" stroke-width="1.8"/></svg></div>
<div class="a" style="left:160px;top:672px;width:10px;height:31px;background:#3a5058;border-radius:4px"></div>
<div class="t" style="left:107px;top:712px;letter-spacing:3px;color:#8aa4ab">BYPASS</div>
<div class="a" style="left:47px;top:703px;width:2px;height:37px;background:#4a6068"></div>
<div class="a" style="left:15px;top:740px;width:159px;height:222px;border:2px solid #3b5b66;border-radius:6px;background:repeating-linear-gradient(180deg,#0c0d0e 0 26px,#0a0a0a 26px 28px)"></div>
<div class="tab" style="left:11px"></div><div class="btn" style="left:23px;width:60px"><svg width="60" height="32" viewBox="0 0 60 32"><path d="M24 11h4l6-5v20l-6-5h-4z" fill="none" stroke="#c8d8dc" stroke-width="1.8"/></svg></div>
<div class="tab" style="left:101px"></div><div class="btn" style="left:113px;width:59px"><svg width="59" height="32" viewBox="0 0 59 32"><circle cx="29" cy="16" r="7" fill="none" stroke="#c8d8dc" stroke-width="1.8"/><path d="M21 25L37 7" stroke="#c8d8dc" stroke-width="1.8"/></svg></div>
<div class="a" style="left:52px;top:1008px;width:2px;height:27px;background:#4a6068"></div>
<div class="t" style="left:36px;top:1038px">AUTO</div><div class="t" style="left:8px;top:1077px">ON</div><div class="t" style="left:66px;top:1096px">OFF</div>
<svg class="a" style="left:24px;top:1052px" width="56" height="48" viewBox="0 0 80 60"><use href="#sw"/></svg>
<div class="ab"></div><div class="ai g"></div><div class="t" style="left:106px;top:1115px;letter-spacing:3px">AUTO</div>
<div class="hl" style="top:1150px"></div><svg class="a" style="left:29px;top:1163px" width="40" height="34"><use href="#fd"/></svg><div class="a" style="left:68px;top:1179px;width:34px;height:2px;background:#4a6068"></div><div class="inb">IN</div><div class="hl" style="top:1207px"></div>
<svg class="a" style="left:42px;top:1227px" width="100" height="100"><use href="#dial"/></svg>
<div class="cn">center</div>
<div class="a" style="left:0;top:1369px;width:186px;height:2px;background:#34464d"></div>
<div class="nb" style="background:#253238;color:#d0dde0">Track-05</div>
<div class="a" style="left:0;top:1401px;width:186px;height:2px;background:#34464d"></div>
<div class="bm">M</div><div class="sb"></div><div class="bs">S</div><div class="t" style="left:106px;top:1493px;letter-spacing:3px">SAFE</div>
<div class="a" style="left:27px;top:1571px;width:37px;height:2px;background:#34464d"></div><div class="a" style="left:108px;top:1571px;width:37px;height:2px;background:#34464d"></div><div class="a" style="left:88px;top:1563px;width:10px;height:20px;background:#000"></div>
</div>
</body></html>
